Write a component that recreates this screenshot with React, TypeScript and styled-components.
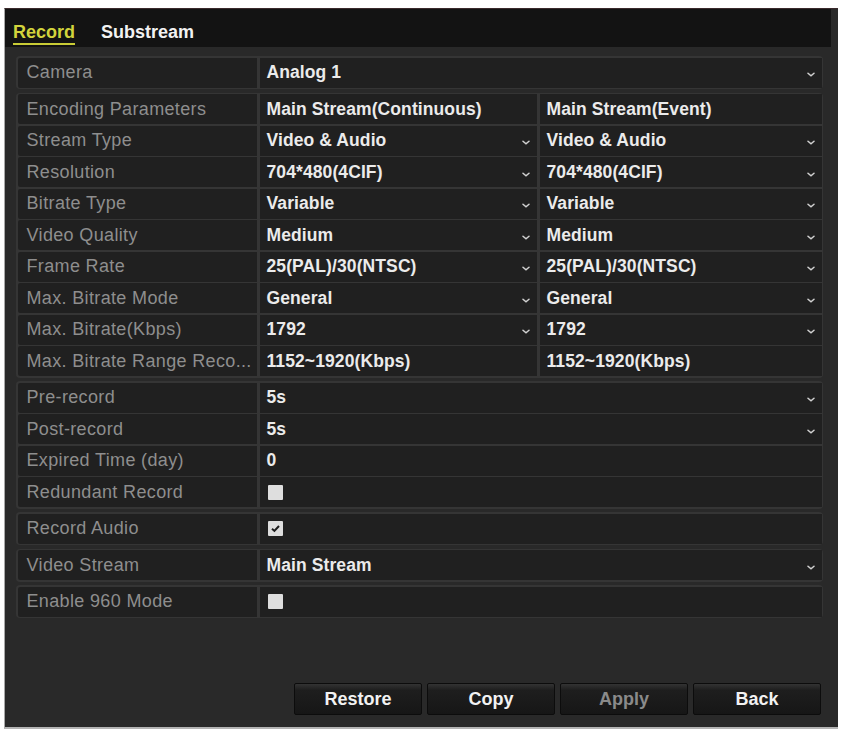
import React from 'react';
import styled, { createGlobalStyle } from 'styled-components';

const GlobalStyle = createGlobalStyle`
    html, body {
        margin: 0;
        padding: 0;
        background: #ffffff;
    }
    body {
        font-family: "Liberation Sans", Arial, sans-serif;
    }
`

type Value =
    | { kind: 'text'; text: string; select?: boolean }
    | { kind: 'check'; checked: boolean };

type Row = { label: string; values: Value[] };

const sel = (text: string): Value => ({ kind: 'text', text, select: true });
const txt = (text: string): Value => ({ kind: 'text', text });
const box = (checked: boolean): Value => ({ kind: 'check', checked });

const groups: Row[][] = [
    [{ label: 'Camera', values: [sel('Analog 1')] }],
    [
        { label: 'Encoding Parameters', values: [txt('Main Stream(Continuous)'), txt('Main Stream(Event)')] },
        { label: 'Stream Type', values: [sel('Video & Audio'), sel('Video & Audio')] },
        { label: 'Resolution', values: [sel('704*480(4CIF)'), sel('704*480(4CIF)')] },
        { label: 'Bitrate Type', values: [sel('Variable'), sel('Variable')] },
        { label: 'Video Quality', values: [sel('Medium'), sel('Medium')] },
        { label: 'Frame Rate', values: [sel('25(PAL)/30(NTSC)'), sel('25(PAL)/30(NTSC)')] },
        { label: 'Max. Bitrate Mode', values: [sel('General'), sel('General')] },
        { label: 'Max. Bitrate(Kbps)', values: [sel('1792'), sel('1792')] },
        { label: 'Max. Bitrate Range Reco...', values: [txt('1152~1920(Kbps)'), txt('1152~1920(Kbps)')] },
    ],
    [
        { label: 'Pre-record', values: [sel('5s')] },
        { label: 'Post-record', values: [sel('5s')] },
        { label: 'Expired Time (day)', values: [txt('0')] },
        { label: 'Redundant Record', values: [box(false)] },
    ],
    [{ label: 'Record Audio', values: [box(true)] }],
    [{ label: 'Video Stream', values: [sel('Main Stream')] }],
    [{ label: 'Enable 960 Mode', values: [box(false)] }],
];

// small drop-down marker at the right end of a select cell
const Chevron = () => (
    <ArrowIcon width="8" height="5" viewBox="0 0 8 5">
        <path d="M1 1.2 L4 3.8 L7 1.2" fill="none" stroke="#d0d0d0" strokeWidth="1.5" strokeLinecap="round" />
    </ArrowIcon>
);

const CheckBox = ({ checked }: { checked: boolean }) => (
    <Box>
        {checked && (
            <svg width="15" height="15" viewBox="0 0 15 15">
                <path d="M4 7.8 L6.4 9.9 L11 5" fill="none" stroke="#1c1c1c" strokeWidth="2" />
            </svg>
        )}
    </Box>
);

export default function App() {
    return (
        <>
            <GlobalStyle />
            <Screen>
                <TabBar>
                    <Tab $active>Record</Tab>
                    <Tab>Substream</Tab>
                </TabBar>
                <Body>
                    {groups.map((rows, gi) => (
                        <Group key={gi}>
                            {rows.map((row) => (
                                <RowLine key={row.label}>
                                    <LabelCell>{row.label}</LabelCell>
                                    {row.values.map((v, vi) => (
                                        <ValueCell key={vi} $span={row.values.length === 1}>
                                            {v.kind === 'check' ? (
                                                <CheckBox checked={v.checked} />
                                            ) : (
                                                <>
                                                    <ValueText>{v.text}</ValueText>
                                                    {v.select && <Chevron />}
                                                </>
                                            )}
                                        </ValueCell>
                                    ))}
                                </RowLine>
                            ))}
                        </Group>
                    ))}
                </Body>
                <ButtonBar>
                    <ActionButton>Restore</ActionButton>
                    <ActionButton>Copy</ActionButton>
                    <ActionButton $disabled>Apply</ActionButton>
                    <ActionButton>Back</ActionButton>
                </ButtonBar>
            </Screen>
        </>
    );
}

const Screen = styled.div`
    box-sizing: border-box;
    margin: 8px 0 0 4px;
    width: 834px;
    height: 721px;
    background: #292929;
    border-left: 1px solid #a8a8a8;
    border-bottom: 2px solid #b4b4b4;
    border-top: 1px solid #3a2a2c;
    display: flex;
    flex-direction: column;
`
const TabBar = styled.div`
    height: 38px;
    margin-right: 7px;
    background: #131313;
    display: flex;
    align-items: flex-end;
    gap: 26px;
    padding: 0 0 2px 8px;
    box-sizing: border-box;
`
const Tab = styled.span<{ $active?: boolean }>`
    font-size: 18px;
    font-weight: bold;
    line-height: 19px;
    padding-bottom: 1px;
    color: ${(p) => (p.$active ? '#d2d43c' : '#f2f2f2')};
    border-bottom: 2px solid ${(p) => (p.$active ? '#c9cc36' : 'transparent')};
`
const Body = styled.div`
    display: flex;
    flex-direction: column;
    gap: 3.5px;
    padding: 9px 15px 0 11px;
`
const Group = styled.div`
    display: flex;
    flex-direction: column;
    gap: 1.5px;
    padding: 1.5px;
    background: #353535;
    border-radius: 4px;
`
const RowLine = styled.div`
    display: grid;
    grid-template-columns: 239px 277px 1fr;
    column-gap: 3px;
    height: 30px;
`
const LabelCell = styled.div`
    background: #202020;
    color: #8e8e8e;
    font-size: 18px;
    letter-spacing: 0.35px;
    padding-left: 9px;
    display: flex;
    align-items: center;
    white-space: nowrap;
    overflow: hidden;
    border-radius: 2px 0 0 2px;
`
const ValueCell = styled.div<{ $span?: boolean }>`
    grid-column: ${(p) => (p.$span ? 'span 2' : 'auto')};
    background: #202020;
    display: flex;
    align-items: center;
    justify-content: space-between;
    padding: 0 7px 0 7px;
    white-space: nowrap;
`
const ValueText = styled.span`
    color: #ebebeb;
    font-size: 17.5px;
    font-weight: bold;
    letter-spacing: 0.1px;
`
const ArrowIcon = styled.svg`
    flex: none;
    margin-top: 4px;
`
const Box = styled.div`
    width: 15px;
    height: 15px;
    background: #dedede;
    border-radius: 1px;
    margin-left: 1px;
`
const ButtonBar = styled.div`
    margin-top: auto;
    display: flex;
    justify-content: flex-end;
    gap: 5px;
    padding: 0 17px 12px 0;
`
const ActionButton = styled.button<{ $disabled?: boolean }>`
    width: 128px;
    height: 32px;
    border: 1px solid #0c0c0c;
    border-radius: 2px;
    background: linear-gradient(#333333 0%, #1e1e1e 20%, #161616 100%);
    color: ${(p) => (p.$disabled ? '#8a8a8a' : '#f2f2f2')};
    font-family: "Liberation Sans", Arial, sans-serif;
    font-size: 18px;
    font-weight: bold;
    padding: 0;
`
